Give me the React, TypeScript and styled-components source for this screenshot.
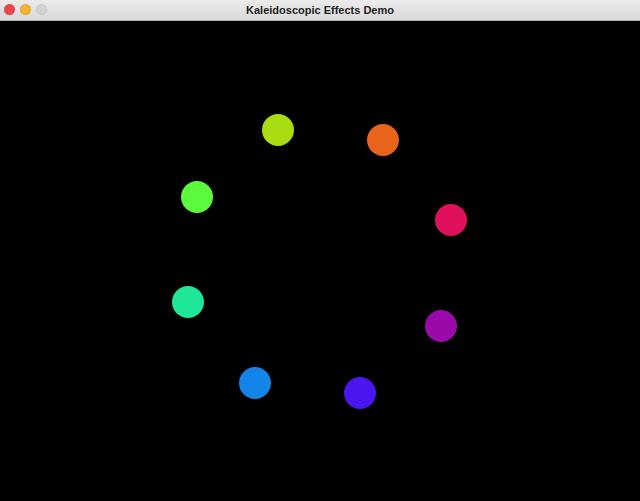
import styled, { createGlobalStyle } from "styled-components";

const GlobalStyle = createGlobalStyle`
  html, body {
    margin: 0;
    padding: 0;
    background: #000;
  }
  #root {
    width: 640px;
    height: 501px;
  }
`;

const dots = [
  { x: 278, y: 130, color: "#aadc12" },
  { x: 383, y: 140, color: "#e8641a" },
  { x: 451, y: 220, color: "#e0105c" },
  { x: 441, y: 326, color: "#9a0aaa" },
  { x: 360, y: 393, color: "#4a16f0" },
  { x: 255, y: 383, color: "#1484e8" },
  { x: 188, y: 302, color: "#1ee898" },
  { x: 197, y: 197, color: "#5cfa3c" },
];

const App = () => {
  return (
    <>
      <GlobalStyle />
      <Window>
        <TitleBar>
          <Lights>
            <Light $color="#f0444e" />
            <Light $color="#f4b52e" />
            <Light $color="#d3d3d3" $border="#c4c4c4" />
          </Lights>
          <Title>Kaleidoscopic Effects Demo</Title>
        </TitleBar>
        <Canvas>
          {dots.map((d) => (
            <Dot
              key={d.color}
              $color={d.color}
              style={{ left: d.x - 16, top: d.y - 16 - 21 }}
            />
          ))}
        </Canvas>
      </Window>
    </>
  );
};

const Window = styled.div`
  width: 640px;
  height: 501px;
  display: flex;
  flex-direction: column;
  background: #000;
`;

const TitleBar = styled.div`
  height: 20px;
  flex-shrink: 0;
  position: relative;
  display: flex;
  align-items: center;
  justify-content: center;
  background: linear-gradient(#ebebeb, #d9d9d9);
  border-bottom: 1px solid #b0b0b0;
`;

const Lights = styled.div`
  position: absolute;
  left: 4px;
  top: 4px;
  display: flex;
  gap: 5px;
`;

const Light = styled.div<{ $color: string; $border?: string }>`
  width: 11px;
  height: 11px;
  border-radius: 50%;
  background: ${(p) => p.$color};
  box-sizing: border-box;
  border: 1px solid ${(p) => p.$border ?? "rgba(0,0,0,0.08)"};
`;

const Title = styled.div`
  font-family: "Liberation Sans", Arial, sans-serif;
  font-size: 11px;
  font-weight: 700;
  color: #222;
`;

const Canvas = styled.div`
  flex: 1;
  position: relative;
  background: #000;
`;

const Dot = styled.div<{ $color: string }>`
  position: absolute;
  width: 32px;
  height: 32px;
  border-radius: 50%;
  background: ${(p) => p.$color};
`;

export default App;
